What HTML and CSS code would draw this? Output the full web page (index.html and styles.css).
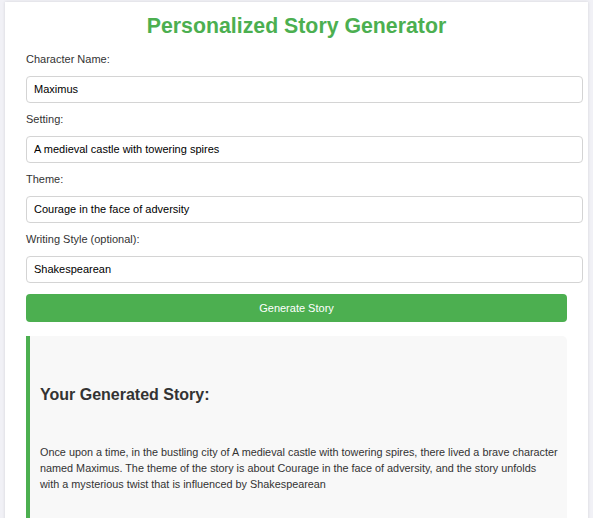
FILE: index.html
```html
<!DOCTYPE html>
<html lang="en">
<head>
<meta charset="utf-8">
<title>Personalized Story Generator</title>
<link rel="stylesheet" href="styles.css">
</head>
<body>
<div class="container">
  <h1 class="title">Personalized Story Generator</h1>
  <form class="form">
    <label class="label" for="name">Character Name:</label>
    <input class="input" id="name" type="text" value="Maximus">
    <label class="label" for="setting">Setting:</label>
    <input class="input" id="setting" type="text" value="A medieval castle with towering spires">
    <label class="label" for="theme">Theme:</label>
    <input class="input" id="theme" type="text" value="Courage in the face of adversity">
    <label class="label" for="style">Writing Style (optional):</label>
    <input class="input" id="style" type="text" value="Shakespearean">
    <button class="button" type="button">Generate Story</button>
  </form>
  <div class="story">
    <h3 class="story-title">Your Generated Story:</h3>
    <p class="story-text">Once upon a time, in the bustling city of A medieval castle with towering spires, there lived a brave character named Maximus. The theme of the story is about Courage in the face of adversity, and the story unfolds with a mysterious twist that is influenced by Shakespearean</p>
  </div>
</div>
</body>
</html>
```
FILE: styles.css
```css
html, body {
  margin: 0;
  padding: 0;
}
body {
  background: #f1f1f6;
  font-family: "Liberation Sans", Arial, sans-serif;
  padding: 2px 5px 0;
  overflow: hidden;
}
.container {
  background: #fff;
  box-shadow: 0 0 3px rgba(0, 0, 0, 0.12);
  padding: 12px 21px 40px;
  min-height: 600px;
}
.title {
  margin: 0;
  font-size: 21.3px;
  line-height: 24px;
  text-align: center;
  color: #4caf50;
  font-weight: bold;
}
.form {
  display: flex;
  flex-direction: column;
  align-items: flex-start;
  margin-top: 15px;
}
.label {
  font-size: 11px;
  line-height: 13px;
  color: #333;
  margin-bottom: 10px;
}
.input {
  width: 100%;
  box-sizing: content-box;
  font-family: "Liberation Sans", Arial, sans-serif;
  font-size: 11px;
  line-height: 13px;
  height: 13px;
  padding: 6px 7px;
  border: 1px solid #d4d4d4;
  border-radius: 4px;
  color: #000;
  margin: 0 0 10px;
  background: #fff;
}
.button {
  align-self: stretch;
  margin-top: 1px;
  height: 28px;
  background: #4caf50;
  color: #fff;
  border: none;
  border-radius: 4px;
  font-family: "Liberation Sans", Arial, sans-serif;
  font-size: 11px;
}
.story {
  margin-top: 14px;
  background: #f8f8f8;
  border-left: 4px solid #4caf50;
  border-radius: 0 5px 5px 0;
  padding: 49px 9px 40px 10px;
}
.story-title {
  margin: 0;
  font-size: 16px;
  line-height: 19px;
  color: #333;
}
.story-text {
  margin: 40px 0 0;
  font-size: 10.83px;
  line-height: 16px;
  color: #333;
}
```
